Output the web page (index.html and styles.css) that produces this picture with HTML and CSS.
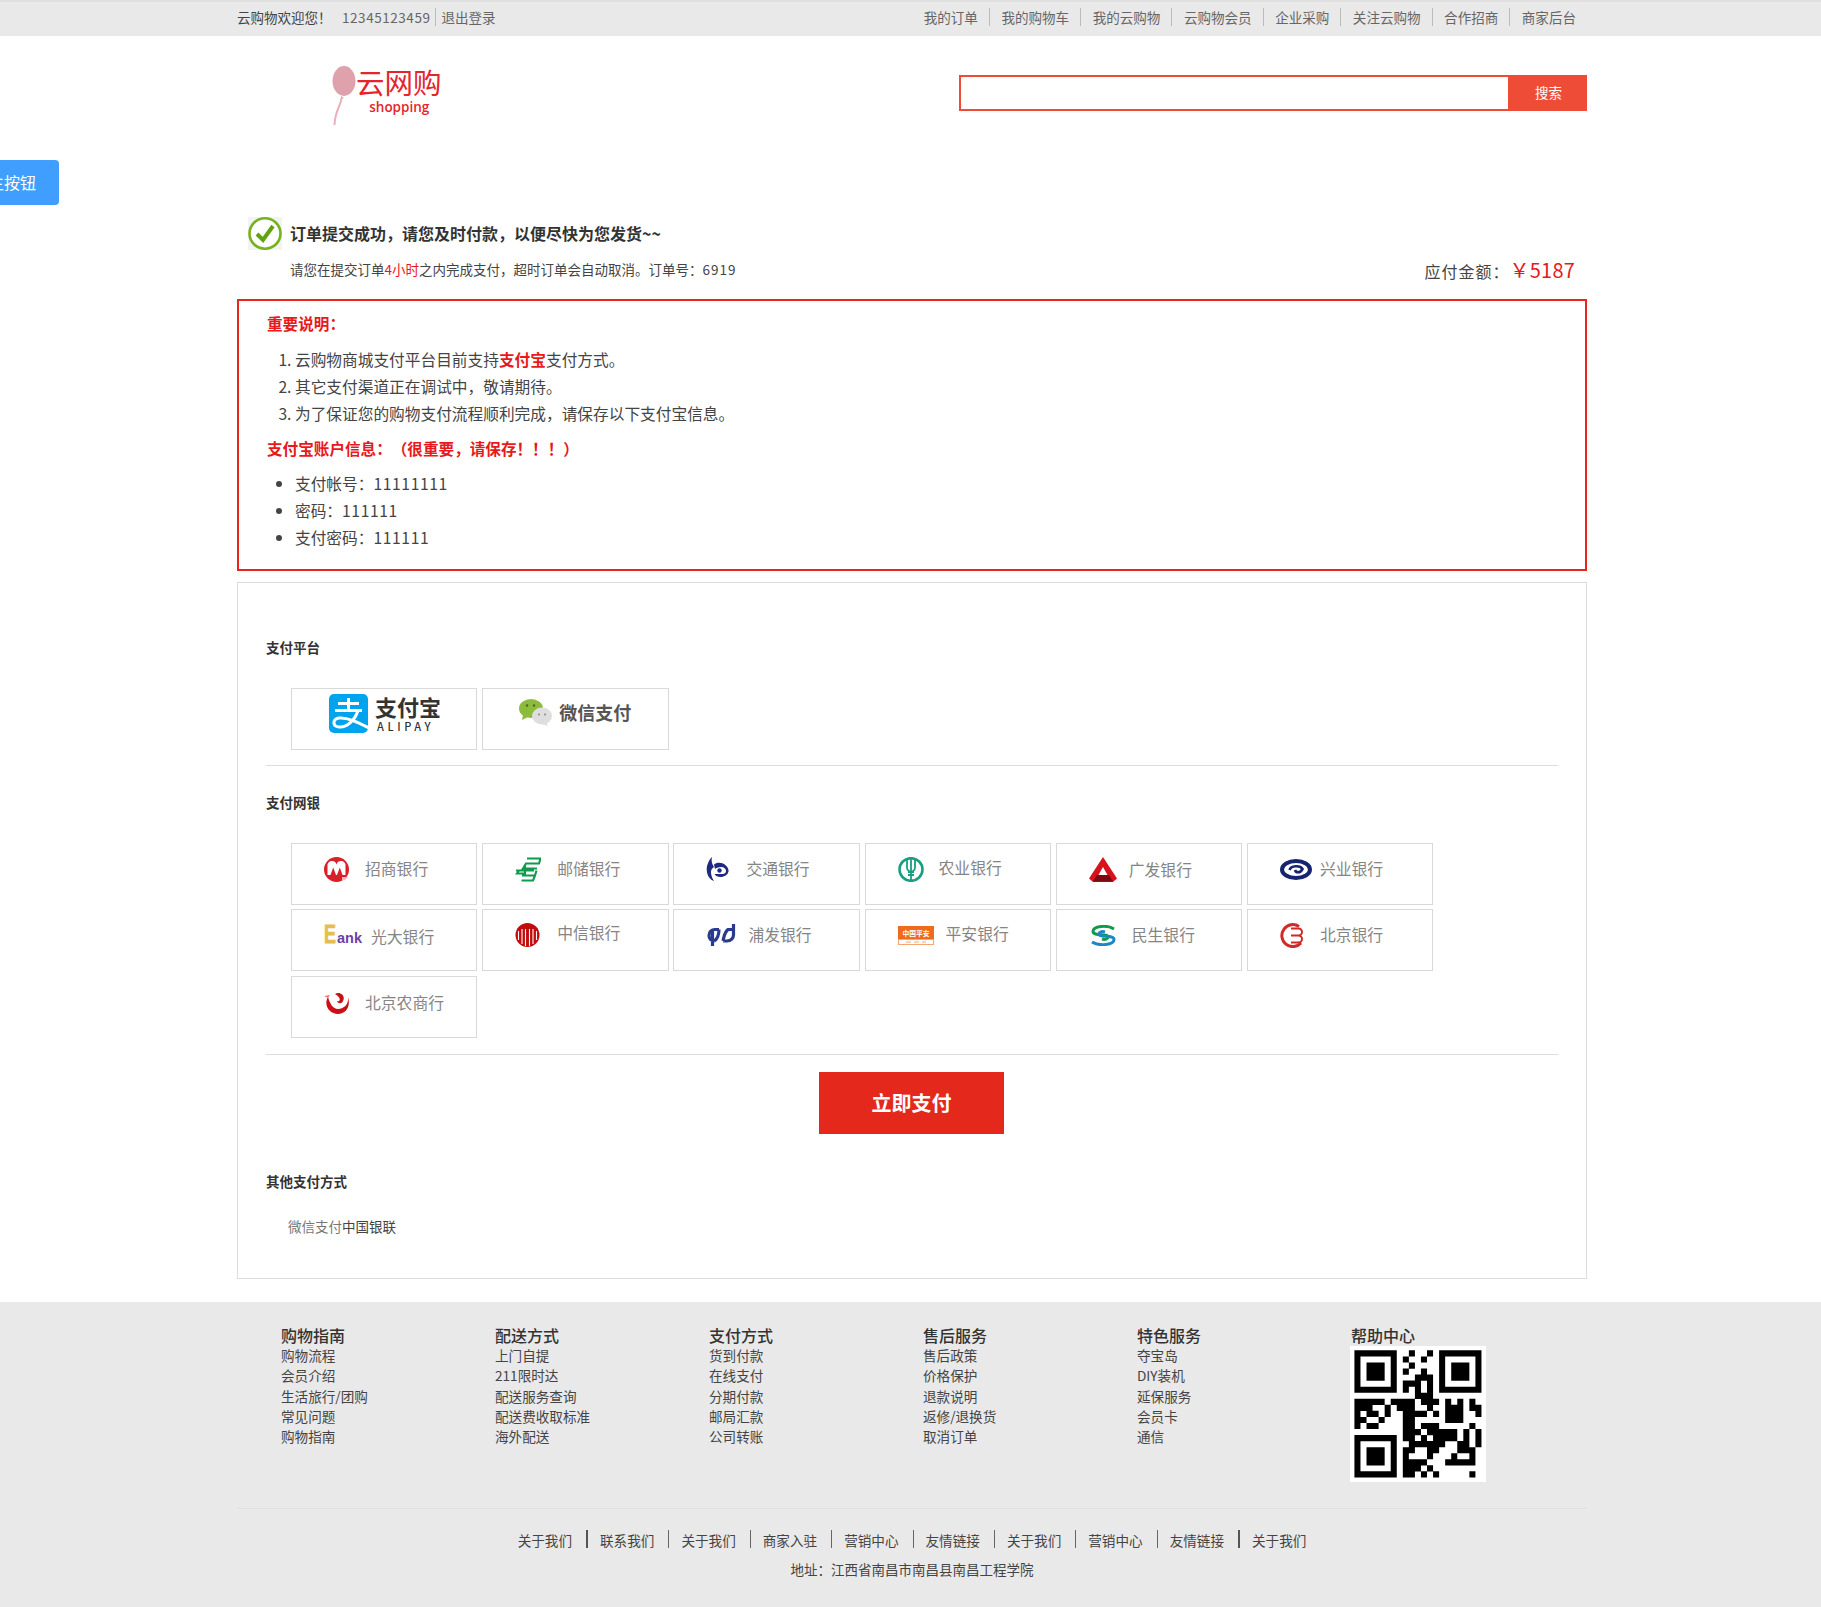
FILE: index.html
```html
<!DOCTYPE html>
<html lang="zh-CN">
<head>
<meta charset="utf-8">
<title>云网购 - 订单支付</title>
<link rel="stylesheet" href="styles.css">
</head>
<body>
<button class="float-btn">主按钮</button>

<div class="topbar">
  <div class="wrap topbar-in">
    <div class="top-left">
      <span class="welcome">云购物欢迎您！</span>
      <span class="phone">12345123459</span>
      <a class="logout">退出登录</a>
    </div>
    <nav class="top-nav">
      <a>我的订单</a><a>我的购物车</a><a>我的云购物</a><a>云购物会员</a><a>企业采购</a><a>关注云购物</a><a>合作招商</a><a>商家后台</a>
    </nav>
  </div>
</div>

<header class="wrap header">
  <div class="logo">
    <svg class="logo-balloon" viewBox="0 0 24 60" width="24" height="60">
      <ellipse cx="12" cy="15" rx="11.5" ry="15" fill="#dfa2ad"/>
      <path d="M9 30l3 2-3 1z" fill="#dfa2ad"/>
      <path d="M9.500 32C9 40 3 44 2.500 59" fill="none" stroke="#eaaeb8" stroke-width="2"/>
    </svg>
    <div class="logo-text">
      <div class="logo-cn">云网购</div>
      <div class="logo-en">shopping</div>
    </div>
  </div>
  <form class="search">
    <input class="search-input" type="text" aria-label="搜索">
    <button class="search-btn" type="button">搜索</button>
  </form>
</header>

<main class="wrap">
  <section class="success">
    <div class="success-head">
      <svg class="success-icon" viewBox="0 0 34 33" width="34" height="33">
        <rect width="34" height="33" fill="#f3f3f1"/>
        <ellipse cx="17" cy="16.5" rx="15.5" ry="15.2" fill="#fff" stroke="#76b21a" stroke-width="2.6"/>
        <path d="M9 17l6 6L25 9" fill="none" stroke="#5fa30f" stroke-width="4"/>
      </svg>
      <h1 class="success-title">订单提交成功，请您及时付款，以便尽快为您发货~~</h1>
    </div>
    <div class="success-sub">
      <p class="success-note">请您在提交订单<em class="red">4小时</em>之内完成支付，超时订单会自动取消。订单号：<span class="digits">6919</span></p>
      <p class="amount">应付金额：<strong class="amount-num">￥5187</strong></p>
    </div>
  </section>

  <section class="notice">
    <h2 class="notice-title">重要说明：</h2>
    <ol class="notice-list">
      <li>云购物商城支付平台目前支持<b class="red">支付宝</b>支付方式。</li>
      <li>其它支付渠道正在调试中，敬请期待。</li>
      <li>为了保证您的购物支付流程顺利完成，请保存以下支付宝信息。</li>
    </ol>
    <h2 class="notice-title notice-second">支付宝账户信息：（很重要，请保存！！！）</h2>
    <ul class="notice-list">
      <li>支付帐号：<span class="list-num">11111111</span></li>
      <li>密码：<span class="list-num">111111</span></li>
      <li>支付密码：<span class="list-num">111111</span></li>
    </ul>
  </section>

  <section class="pay">
    <h3 class="pay-title">支付平台</h3>
    <div class="pay-grid pay-platform">
      <div class="pay-cell alipay">
        <svg class="alipay-mark" viewBox="0 0 39 39" width="39" height="39">
          <defs><clipPath id="ali"><rect width="39" height="39" rx="5"/></clipPath></defs>
          <rect width="39" height="39" rx="5" fill="#00a3ee"/>
          <g clip-path="url(#ali)" fill="none" stroke="#fff" stroke-width="3">
            <path d="M9 9.5H30M6 16.5H33M19.5 4V16.5"/>
            <path d="M29 16.5C26 26 18 34 10 33C3 32 3.500 25 10 24C18 23 28 28 40 34"/>
          </g>
        </svg>
        <div class="alipay-text">
          <div class="alipay-cn">支付宝</div>
          <div class="alipay-en">ALIPAY</div>
        </div>
      </div>
      <div class="pay-cell wechat">
        <svg viewBox="0 0 33 27" width="33" height="27">
          <ellipse cx="12" cy="9.500" rx="12" ry="9.500" fill="#8dbb3c"/>
          <path d="M4 16l-1 5 6-3z" fill="#8dbb3c"/>
          <circle cx="8" cy="6.500" r="1.200" fill="#4a6a20"/>
          <circle cx="15" cy="6.500" r="1.200" fill="#4a6a20"/>
          <ellipse cx="23" cy="17" rx="10" ry="8.500" fill="#dedede"/>
          <path d="M27 23l2 4-6-2z" fill="#dedede"/>
          <circle cx="20" cy="15.500" r="1" fill="#888"/>
          <circle cx="26" cy="15.500" r="1" fill="#888"/>
        </svg>
        <span class="wechat-text">微信支付</span>
      </div>
    </div>
    <hr class="pay-rule rule-one">
    <h3 class="pay-title title-bank">支付网银</h3>
    <div class="pay-grid pay-banks">
      <div class="pay-cell bank b-cmb">
        <svg viewBox="0 0 25 25" width="25" height="25"><circle cx="12.500" cy="12.500" r="12.500" fill="#d91f2a"/><path d="M3.500 18V9.500a4.500 4.500 0 0 1 9-2 4.500 4.500 0 0 1 9 2V18z" fill="#fff"/><path d="M6.500 18L9.200 10.500 12 18zM13 18l2.800-7.500L18.500 18z" fill="#d91f2a"/><path d="M18 20h6l-3 3h-3z" fill="#f2b6b9"/></svg>
        <span class="bank-name">招商银行</span>
      </div>
      <div class="pay-cell bank b-psbc">
        <svg viewBox="0 0 26 25" width="26" height="25"><path d="M12 1.500H25.500L24 6.500H11L8 11.500H22M1 13.500H19M4 13.500L2 16.500H9M10 8V18.500M7 18.500H20L21.500 13.500M6.500 23.500H18L20 18.500" fill="none" stroke="#0f9b4c" stroke-width="2.100"/></svg>
        <span class="bank-name">邮储银行</span>
      </div>
      <div class="pay-cell bank b-bocom">
        <svg viewBox="0 0 23 24" width="23" height="24"><path d="M6 0C2 4 0 10 1 15c.7 5 4 8 7 9-2-3-3-6-3-9 0-2 1-4 3-5C6 7 5 4 6 0z" fill="#1d2a80"/><path d="M8 7.500C10 5.500 14 5 17 6.500c4 2 6 5.500 5.500 8-.5 3-4 5.500-8 5.500-3 0-5-1-6-3h8c2 0 3.500-1 3.500-3s-2-4-5-4c-3 0-5 1-6 2z" fill="#1d2a80"/><circle cx="13.500" cy="13.500" r="2.200" fill="#1d2a80"/></svg>
        <span class="bank-name">交通银行</span>
      </div>
      <div class="pay-cell bank b-abc">
        <svg viewBox="0 0 26 25" width="26" height="25"><ellipse cx="13" cy="12.500" rx="11.500" ry="11.300" fill="none" stroke="#1a9e80" stroke-width="2.600"/><path d="M13 1V24M9 3v7.500a4 4 0 0 0 8 0V3M10 15h6M10 18h6" fill="none" stroke="#1a9e80" stroke-width="1.800"/></svg>
        <span class="bank-name">农业银行</span>
      </div>
      <div class="pay-cell bank b-gdb">
        <svg viewBox="0 0 28 25" width="28" height="25"><path d="M14 0L28 21.500 24 25H4L0 21.500z" fill="#d6121f"/><path d="M8 18h12l4 6.500H4z" fill="#7c0a10"/><path d="M14 10l4.500 8h-9z" fill="#fff"/></svg>
        <span class="bank-name">广发银行</span>
      </div>
      <div class="pay-cell bank b-cib">
        <svg viewBox="0 0 32 21" width="32" height="21"><ellipse cx="16" cy="10.500" rx="14" ry="8.500" fill="none" stroke="#15246e" stroke-width="4"/><path d="M9.500 11C11 6.500 20 6 22.500 10 20 14.500 16 14 15 11" fill="none" stroke="#15246e" stroke-width="2.600"/></svg>
        <span class="bank-name">兴业银行</span>
      </div>

      <div class="pay-cell bank b-ceb">
        <span class="eank"><b class="eank-e">E</b><b class="eank-ank">ank</b></span>
        <span class="bank-name">光大银行</span>
      </div>
      <div class="pay-cell bank b-citic">
        <svg viewBox="0 0 25 24" width="25" height="24"><circle cx="12.500" cy="12" r="12" fill="#c00d0d"/><path d="M3.500 8V17M7 6V21M10.500 6V23M14.500 6V23M18 6V21M21.500 8V17" fill="none" stroke="#fff" stroke-width="1.100"/></svg>
        <span class="bank-name">中信银行</span>
      </div>
      <div class="pay-cell bank b-spdb">
        <svg viewBox="0 0 30 24" width="30" height="24"><path d="M13 6.500H9C5.500 6.500 3 9 3 12.500 3 15.500 5 18 8.500 18M6.500 8V23M13 6.500C13 11 12 15 8.500 18M17 18H21C25 18 27.500 15 27.500 12V1M17 18C18 14 18 10 22 6.500H27" fill="none" stroke="#2b3a8c" stroke-width="3.200"/></svg>
        <span class="bank-name">浦发银行</span>
      </div>
      <div class="pay-cell bank b-pingan">
        <svg viewBox="0 0 36 19" width="36" height="19"><rect width="36" height="13.500" fill="#ee6a1c"/><rect x=".5" y="13.500" width="35" height="5" fill="#fff" stroke="#f3a671"/><text class="pingan-text" x="18" y="10" text-anchor="middle">中国平安</text><path d="M8 16h5M16 16h5M24 16h4" stroke="#f3a671"/></svg>
        <span class="bank-name">平安银行</span>
      </div>
      <div class="pay-cell bank b-cmbc">
        <svg viewBox="0 0 28 21" width="28" height="21"><path d="M25 4C18-.5 4 1 4 6.500c0 5 15 1.500 15 5.500 0 2-3 3-6 2" fill="none" stroke="#12994a" stroke-width="3"/><path d="M3 17c7 4.500 22 3 22-2.500 0-5-15-1.500-15-5.500 0-2 3-3 6-2" fill="none" stroke="#1d86c8" stroke-width="3"/></svg>
        <span class="bank-name">民生银行</span>
      </div>
      <div class="pay-cell bank b-bob">
        <svg viewBox="0 0 26 26" width="26" height="26"><path d="M19 4.500A11 11 0 1 0 21 21" fill="none" stroke="#d02a2a" stroke-width="3"/><path d="M11 6.500h7.500a3.500 3.500 0 0 1 0 7H11M18.500 13.500a3.500 3.500 0 0 1 0 7H11" fill="none" stroke="#d02a2a" stroke-width="2"/></svg>
        <span class="bank-name">北京银行</span>
      </div>

      <div class="pay-cell bank b-bjrcb">
        <svg viewBox="0 0 26 22" width="26" height="22"><path d="M4 5C-1 14 6 22 14 22c8 0 13-8 10-17 1 7-4 12-10 12C9 17 6 12 4 5z" fill="#cc0f14"/><path d="M11 2c5-3 11 2 8 7-1 3-5 3-6 0 3 1 5-3-2-7z" fill="#cc0f14"/><path d="M0 4l6-1-2 3z" fill="#e8767a"/></svg>
        <span class="bank-name">北京农商行</span>
      </div>
    </div>
    <hr class="pay-rule rule-two">
    <button class="pay-now" type="button">立即支付</button>
    <h3 class="pay-title title-other">其他支付方式</h3>
    <p class="pay-other"><a class="other-wx">微信支付</a><a class="other-up">中国银联</a></p>
  </section>
</main>

<footer class="footer">
  <div class="wrap">
    <div class="foot-cols">
      <div class="foot-col">
        <h4>购物指南</h4>
        <a>购物流程</a><a>会员介绍</a><a>生活旅行/团购</a><a>常见问题</a><a>购物指南</a>
      </div>
      <div class="foot-col">
        <h4>配送方式</h4>
        <a>上门自提</a><a>211限时达</a><a>配送服务查询</a><a>配送费收取标准</a><a>海外配送</a>
      </div>
      <div class="foot-col">
        <h4>支付方式</h4>
        <a>货到付款</a><a>在线支付</a><a>分期付款</a><a>邮局汇款</a><a>公司转账</a>
      </div>
      <div class="foot-col">
        <h4>售后服务</h4>
        <a>售后政策</a><a>价格保护</a><a>退款说明</a><a>返修/退换货</a><a>取消订单</a>
      </div>
      <div class="foot-col">
        <h4>特色服务</h4>
        <a>夺宝岛</a><a>DIY装机</a><a>延保服务</a><a>会员卡</a><a>通信</a>
      </div>
      <div class="foot-col">
        <h4>帮助中心</h4>
        <svg class="qr" viewBox="-.73 -.73 22.480 22.480" width="136" height="136">
          <rect x="-.73" y="-.73" width="22.480" height="22.480" fill="#fff"/>
          <path fill="none" stroke="#000" stroke-width="1.020" d="
          M0 .5h7M9 .5h1M12 .5h1M14 .5h7
          M0 1.500h1M6 1.500h1M8 1.500h1M11 1.500h1M14 1.500h1M20 1.500h1
          M0 2.500h1M2 2.500h3M6 2.500h1M9 2.500h1M14 2.500h1M16 2.500h3M20 2.500h1
          M0 3.500h1M2 3.500h3M6 3.500h1M8 3.500h1M11 3.500h1M14 3.500h1M16 3.500h3M20 3.500h1
          M0 4.500h1M2 4.500h3M6 4.500h1M10 4.500h3M14 4.500h1M16 4.500h3M20 4.500h1
          M0 5.500h1M6 5.500h1M8 5.500h3M12 5.500h1M14 5.500h1M20 5.500h1
          M0 6.500h7M8 6.500h1M10 6.500h1M12 6.500h1M14 6.500h7
          M10 7.500h3
          M0 8.500h5M6 8.500h4M11 8.500h3M15 8.500h1M17 8.500h1M19 8.500h1
          M0 9.500h3M5 9.500h1M7 9.500h3M12 9.500h1M15 9.500h3M19 9.500h2
          M0 10.500h1M2 10.500h2M5 10.500h1M8 10.500h2M10 10.500h2M13 10.500h1M15 10.500h3M20 10.500h1
          M0 11.500h2M4 11.500h1M8 11.500h2M15 11.500h3
          M0 12.500h1M2 12.500h2M8 12.500h2M11 12.500h3M19 12.500h1
          M8 13.500h3M12 13.500h5M18 13.500h1M20 13.500h1
          M0 14.500h7M8 14.500h2M11 14.500h1M13 14.500h4M18 14.500h1M20 14.500h1
          M0 15.500h1M6 15.500h1M9 15.500h6M17 15.500h2M20 15.500h1
          M0 16.500h1M2 16.500h3M6 16.500h1M8 16.500h2M12 16.500h2M17 16.500h3
          M0 17.500h1M2 17.500h3M6 17.500h1M8 17.500h1M12 17.500h1M16 17.500h1M19 17.500h1
          M0 18.500h1M2 18.500h3M6 18.500h1M8 18.500h4M15 18.500h5
          M0 19.500h1M6 19.500h1M8 19.500h3M12 19.500h1
          M0 20.500h7M8 20.500h2M11 20.500h1M13 20.500h1M19 20.500h1"/>
        </svg>
      </div>
    </div>
    <div class="foot-links">
      <a>关于我们</a><a class="strong-sep">联系我们</a><a>关于我们</a><a>商家入驻</a><a>营销中心</a><a>友情链接</a><a>关于我们</a><a>营销中心</a><a>友情链接</a><a class="strong-sep">关于我们</a>
    </div>
    <p class="foot-addr">地址：江西省南昌市南昌县南昌工程学院</p>
  </div>
</footer>
</body>
</html>
```
FILE: styles.css
```css
* { box-sizing: border-box; }
html, body { margin: 0; padding: 0; }
body {
  font-family: "Noto Sans CJK SC", "Liberation Sans", sans-serif;
  color: #333;
  background: #fff;
  overflow-x: hidden;
  text-spacing-trim: space-all;
}
h1, h2, h3, h4, p, ol, ul { margin: 0; padding: 0; }
a { color: inherit; text-decoration: none; }
em { font-style: normal; }
hr { border: 0; margin: 0; }
.red { color: #e8191c; }

.wrap { width: 1350px; margin-left: 237px; }

.float-btn {
  position: absolute;
  left: -23px;
  top: 160px;
  width: 82px;
  height: 45px;
  padding: 0 0 2px 11px;
  border: 0;
  border-radius: 4px;
  background: #409eff;
  color: #fff;
  font: 16px "Noto Sans CJK SC", sans-serif;
  text-align: left;
}

/* top bar */
.topbar {
  height: 36px;
  background: #e9e9e9;
  border-top: 2px solid #dfdfdf;
  padding-bottom: 2px;
  font-size: 13.500px;
}
.topbar-in { display: flex; justify-content: space-between; align-items: center; height: 30px; }
.top-left { display: flex; align-items: center; color: #666; line-height: 18px; }
.welcome { color: #444; width: 105px; }
.phone { letter-spacing: .55px; padding-right: 5px; border-right: 1px solid #bbb; }
.logout { padding-left: 5px; }
.top-nav { display: flex; align-items: center; color: #666; line-height: 18px; font-size: 13.550px; }
.top-nav a { padding: 0 11px 0 11.500px; border-left: 1px solid #bbb; }
.top-nav a:first-child { border-left: 0; }

/* header */
.header { display: flex; justify-content: space-between; height: 171px; padding-top: 30px; }
.logo { display: flex; margin-left: 95px; height: 60px; }
.logo-text { text-align: center; }
.logo-cn { font-size: 28.500px; line-height: 30px; margin-top: 1px; color: #e5252a; }
.logo-en { font: 600 13.500px/16px "Open Sans", sans-serif; color: #e5252a; margin: 2px 0 0 1px; }
.search { display: flex; width: 628px; height: 36px; margin-top: 9px; }
.search-input { flex: 1; min-width: 0; height: 36px; border: 2px solid #ef4c38; border-right: 0; background: #fff; outline: 0; }
.search-btn {
  width: 79px; height: 36px; border: 0; background: #ef4c38; color: #fff;
  font: 13.500px "Noto Sans CJK SC", sans-serif; padding: 0 0 3px 2px;
}

/* success */
.success { height: 92px; padding-top: 10px; }
.success-head { display: flex; align-items: center; margin-left: 11px; height: 33px; }
.success-title { margin-left: 8px; font-size: 16px; line-height: 33px; font-weight: 700; color: #333; }
.success-sub { display: flex; justify-content: space-between; margin-top: 8px; }
.success-note { margin: 1px 0 0 53px; font-size: 13.500px; line-height: 20px; color: #444; }
.digits { letter-spacing: 1px; }
.amount { padding-right: 12px; margin-top: -1px; font-size: 16px; line-height: 26px; color: #444; letter-spacing: 1px; }
.amount-num { font-size: 20px; font-weight: 400; color: #e8191c; letter-spacing: .2px; }

/* notice */
.notice { height: 272px; border: 2px solid #e7261d; padding: 9px 0 0 28px; }
.notice-title { color: #e8191c; font-weight: 700; line-height: 27px; font-size: 15.600px; }
.notice-second { margin: 8px 0 8px; }
.notice-list { padding-left: 28px; font-size: 15.700px; line-height: 27px; color: #444; }
ol.notice-list { margin-top: 9px; }
.list-num { letter-spacing: .6px; }

/* pay panel */
.pay { height: 697px; margin-top: 11px; border: 1px solid #ddd; padding: 54px 28px 0 28px; }
.pay-title { font-size: 13.500px; line-height: 20px; font-weight: 700; color: #333; }
.pay-grid {
  display: grid;
  grid-template-columns: repeat(6, 186.400px);
  column-gap: 4.800px;
  row-gap: 4.300px;
  grid-auto-rows: 62px;
  padding-left: 25px;
  margin-top: 31px;
}
.pay-cell { display: flex; align-items: flex-start; border: 1px solid #d9d9d9; }
.pay-rule { height: 1px; background: #ddd; }
.rule-one { margin-top: 15px; }
.title-bank { margin-top: 26px; }
.rule-two { margin-top: 16px; }

.alipay { padding: 5px 0 0 37px; }
.alipay-text { margin-left: 7px; color: #333; }
.alipay-cn { font-size: 22px; line-height: 24px; font-weight: 700; }
.alipay-en { font-size: 11px; line-height: 12px; letter-spacing: 3.600px; font-weight: 500; margin: 2px 0 0 2px; }
.wechat { padding: 8px 0 0 36px; }
.wechat-text { margin-left: 7px; font-size: 18px; line-height: 30px; font-weight: 700; color: #555; }
.wechat svg { margin-top: 2px; }

.bank { padding: 13px 0 0 32px; }
.bank > svg, .eank { flex: none; margin-top: var(--iy, 0); }
.bank-name {
  margin: var(--ly, 0) 0 0 var(--gap, 16px);
  font-size: 15.800px;
  line-height: 24px;
  color: #858585;
  white-space: nowrap;
}
.b-bocom { --gap: 17px; }
.b-abc { --gap: 15px; --ly: -1px; }
.b-gdb { --gap: 12px; --ly: 1px; }
.b-cib { --gap: 8px; --iy: 2px; }
.b-ceb { --gap: 7px; --iy: 1px; --ly: 2px; }
.b-citic { --gap: 17px; --ly: -2px; }
.b-spdb { --gap: 12px; }
.b-pingan { --gap: 12px; --iy: 3px; --ly: -1px; }
.b-cmbc { --gap: 15px; --iy: 2px; }
.b-bob { --gap: 14px; --iy: -1px; }
.b-bjrcb { --gap: 15px; --iy: 2px; --ly: 1px; }
.eank { display: flex; align-items: baseline; width: 40px; height: 20px; font-family: "Liberation Sans", sans-serif; line-height: 20px; }
.eank-e { width: 13px; font-size: 25px; color: #e3bf52; -webkit-text-stroke: .8px #e3bf52; transform: scaleX(.72); transform-origin: left; }
.eank-ank { font-size: 14.500px; color: #6d3fa3; }
.pingan-text { font: 700 6.800px "Noto Sans CJK SC", sans-serif; fill: #fff; }

.pay-now {
  display: block;
  width: 185px; height: 62px;
  margin: 17px 0 0 553px;
  padding: 0;
  border: 0;
  background: #e4281b;
  color: #fff;
  font: 700 20px "Noto Sans CJK SC", sans-serif;
}
.title-other { margin-top: 37px; }
.pay-other { margin: 25px 0 0 22px; font-size: 13.500px; line-height: 20px; }
.other-wx { color: #777; }
.other-up { color: #444; }

/* footer */
.footer { height: 305px; margin-top: 23px; background: #e9e9e9; }
.foot-cols {
  display: grid;
  grid-template-columns: repeat(6, 214px);
  height: 207px;
  padding: 23px 0 0 44px;
  border-bottom: 1px solid #e1e1e1;
}
.foot-col h4 { font-size: 16px; line-height: 20px; font-weight: 500; color: #333; }
.foot-col a { display: block; font-size: 13.600px; line-height: 20.300px; color: #444; white-space: nowrap; }
.qr { display: block; margin: 1px 0 0 -1px; }
.foot-links { display: flex; justify-content: center; margin-top: 21px; padding-left: 2px; font-size: 13.600px; line-height: 20px; color: #444; }
.foot-links a { padding: 0 14px 0 12px; border-left: 1px solid #666; height: 18px; line-height: 20px; }
.foot-links a:first-child { border-left: 0; }
.foot-links a.strong-sep { border-left: 2px solid #555; }
.foot-addr { margin-top: 11px; text-align: center; font-size: 13.500px; line-height: 20px; color: #444; }
```
